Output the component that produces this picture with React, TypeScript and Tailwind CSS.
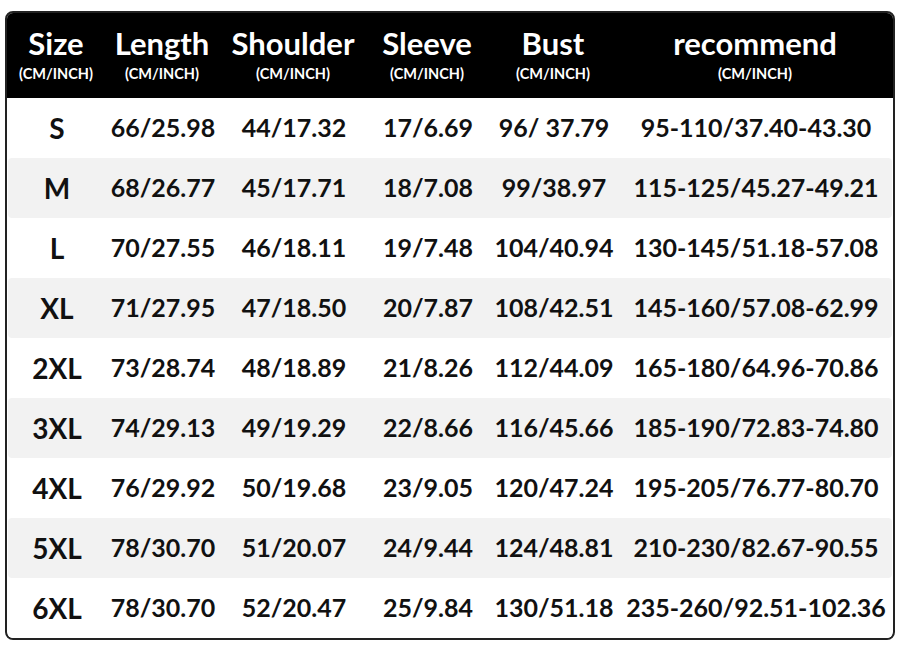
import React from "react";

const headers = ["Size", "Length", "Shoulder", "Sleeve", "Bust", "recommend"];

const rows: string[][] = [
  ["S", "66/25.98", "44/17.32", "17/6.69", "96/ 37.79", "95-110/37.40-43.30"],
  ["M", "68/26.77", "45/17.71", "18/7.08", "99/38.97", "115-125/45.27-49.21"],
  ["L", "70/27.55", "46/18.11", "19/7.48", "104/40.94", "130-145/51.18-57.08"],
  ["XL", "71/27.95", "47/18.50", "20/7.87", "108/42.51", "145-160/57.08-62.99"],
  ["2XL", "73/28.74", "48/18.89", "21/8.26", "112/44.09", "165-180/64.96-70.86"],
  ["3XL", "74/29.13", "49/19.29", "22/8.66", "116/45.66", "185-190/72.83-74.80"],
  ["4XL", "76/29.92", "50/19.68", "23/9.05", "120/47.24", "195-205/76.77-80.70"],
  ["5XL", "78/30.70", "51/20.07", "24/9.44", "124/48.81", "210-230/82.67-90.55"],
  ["6XL", "78/30.70", "52/20.47", "25/9.84", "130/51.18", "235-260/92.51-102.36"],
];

const cols = "grid grid-cols-[98px_114px_148px_120px_132px_272px]";

export default function App() {
  return (
    <div className="w-[911px] h-[648px] bg-white pt-[11px] pl-[5px] font-['Lato','Open_Sans',sans-serif] font-bold">
      <div className="w-[890px] h-[629px] border-2 border-[#222] rounded-[8px] overflow-hidden flex flex-col">
        <div className={`${cols} h-[85px] bg-black text-white -mt-[2px] -mx-[2px] pt-[17px] pl-[2px] pr-[2px] box-content`}>
          {headers.map((h) => (
            <div key={h} className="flex flex-col items-center">
              <div className="text-[31px] leading-[30px] whitespace-nowrap">{h}</div>
              <div className="text-[14.5px] leading-[14px] mt-[9px] whitespace-nowrap">(CM/INCH)</div>
            </div>
          ))}
        </div>
        <div className="flex flex-col">
          {rows.map((r, i) => (
            <div
              key={r[0]}
              className={`${cols} h-[60px] items-center mx-px rounded-[4px] text-[#111] ${i % 2 === 1 ? "bg-[#f2f2f2]" : "bg-white"}`}
            >
              {r.map((c, j) => (
                <div key={j} className={`text-center whitespace-nowrap ${j === 0 ? "text-[28px]" : "text-[25px]"}`}>
                  {c}
                </div>
              ))}
            </div>
          ))}
        </div>
      </div>
    </div>
  );
}
